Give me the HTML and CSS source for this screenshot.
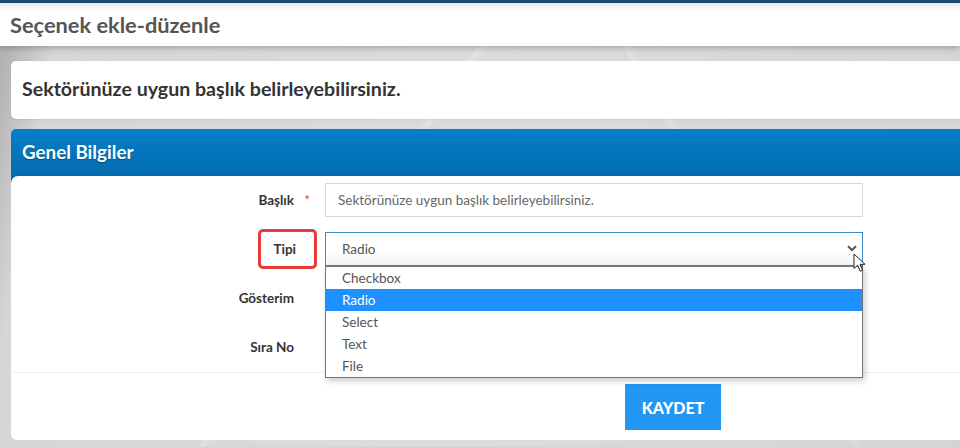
FILE: index.html
```html
<!DOCTYPE html>
<html lang="tr">
<head>
<meta charset="utf-8">
<title>Seçenek ekle-düzenle</title>
<link rel="stylesheet" href="styles.css">
</head>
<body>
<div class="topline"></div>
<header class="pagehead"><h1>Seçenek ekle-düzenle</h1></header>
<main class="content">
  <section class="note"><p>Sektörünüze uygun başlık belirleyebilirsiniz.</p></section>
  <section class="panel">
    <div class="panel-head"><h2>Genel Bilgiler</h2></div>
    <div class="panel-body">
      <form class="form">
        <div class="row">
          <label class="lbl"><span class="lbl-text">Başlık<span class="req">*</span></span></label>
          <div class="field"><div class="input">Sektörünüze uygun başlık belirleyebilirsiniz.</div></div>
        </div>
        <div class="row">
          <label class="lbl"><span class="lbl-text mark">Tipi</span></label>
          <div class="field">
            <div class="select">Radio
              <svg class="chev" width="10" height="7" viewBox="0 0 10 7"><path d="M1 1.2 L5 5 L9 1.2" fill="none" stroke="#555" stroke-width="2"/></svg>
            </div>
            <ul class="options">
              <li>Checkbox</li>
              <li class="sel">Radio</li>
              <li>Select</li>
              <li>Text</li>
              <li>File</li>
            </ul>
            <svg class="cursor" width="14" height="20" viewBox="0 0 14 20"><path d="M1 1 L1 15.5 L4.6 12.2 L7.2 18.2 L9.6 17.2 L7 11.3 L12 11.3 Z" fill="#fff" stroke="#222" stroke-width="1" stroke-linejoin="round"/></svg>
          </div>
        </div>
        <div class="row">
          <label class="lbl"><span class="lbl-text">Gösterim</span></label>
          <div class="field"><div class="input"></div></div>
        </div>
        <div class="row">
          <label class="lbl"><span class="lbl-text">Sıra No</span></label>
          <div class="field"><div class="input"></div></div>
        </div>
      </form>
      <div class="actions"><button type="button" class="btn">KAYDET</button></div>
    </div>
  </section>
</main>
</body>
</html>
```

FILE: styles.css
```css
* { box-sizing: border-box; }
html, body { margin: 0; padding: 0; }
body {
  width: 960px;
  height: 447px;
  overflow: hidden;
  font-family: Lato, "Noto Sans", sans-serif;
  background:
    linear-gradient(125deg, transparent 0 40%, rgba(255,255,255,0.25) 40.3%, transparent 41%),
    linear-gradient(60deg, transparent 0 70%, rgba(255,255,255,0.2) 70.3%, transparent 71%),
    linear-gradient(100deg, #a9a9a9 0%, #d6d6d6 6%, #dcdcdc 50%, #d4d4d4 100%);
}
.topline { height: 3px; background: #1d4b78; }
.pagehead {
  height: 43px;
  background: linear-gradient(#e6e6e6, #fff 8px, #fff);
  box-shadow: 0 2px 6px rgba(0,0,0,0.25);
  display: flex;
  align-items: center;
  padding-left: 10px;
  position: relative;
}
.pagehead h1 {
  margin: 0;
  font-size: 21.8px;
  font-weight: 700;
  color: #555;
}
.content {
  padding: 15px 0 0 11px;
  margin-right: -10px;
  display: flex;
  flex-direction: column;
  gap: 10px;
}
.note {
  height: 58px;
  background: #fff;
  border-radius: 5px;
  display: flex;
  align-items: center;
  padding: 0 11px 4px;
  box-shadow: 0 1px 2px rgba(0,0,0,0.08);
}
.note p {
  margin: 0;
  font-size: 19.6px;
  font-weight: 700;
  color: #333;
}
.panel {
  border-radius: 5px;
  background: linear-gradient(#0380cc, #0467a6) top left / 100% 56px no-repeat;
}
.panel-head {
  height: 47px;
  display: flex;
  align-items: center;
  padding: 0 11px 2px;
}
.panel-head h2 {
  margin: 0;
  font-size: 18.8px;
  font-weight: 700;
  color: #fff;
  text-shadow: 0 1px 1px rgba(0,0,0,0.25);
}
.panel-body {
  background: #fff;
  border-radius: 7px 0 0 6px;
}
.form {
  padding: 7px 0 8px;
  display: flex;
  flex-direction: column;
  gap: 15px;
  border-bottom: 1px solid #eeeeee;
}
.row {
  display: grid;
  grid-template-columns: 314px 538px;
  align-items: center;
  height: 34px;
}
.lbl {
  text-align: right;
  padding-right: 31px;
  font-size: 13.5px;
  font-weight: 700;
  color: #333;
}
.lbl-text { position: relative; display: inline-block; line-height: 18px; }
.req {
  position: absolute;
  right: -16px;
  top: 0;
  color: #e53935;
  font-weight: 400;
}
.mark { margin-right: -2px; }
.mark::before {
  content: "";
  position: absolute;
  left: -15px;
  right: -21px;
  top: -11px;
  bottom: -11px;
  border: 3px solid #e83a3a;
  border-radius: 5px;
}
.field { position: relative; height: 34px; }
.input {
  height: 34px;
  border: 1px solid #d4d8e0;
  background: #fff;
  padding: 0 12px;
  display: flex;
  align-items: center;
  font-size: 13.5px;
  color: #666;
}
.select {
  height: 34px;
  border: 1px solid #3a8dc5;
  background: linear-gradient(#fff 60%, #f3f3f3);
  padding: 0 16px;
  display: flex;
  align-items: center;
  font-size: 13.5px;
  color: #555;
  position: relative;
}
.chev { position: absolute; right: 5px; top: 12px; }
.options {
  position: absolute;
  left: 0;
  top: 34px;
  width: 538px;
  margin: 0;
  padding: 0;
  list-style: none;
  background: #fff;
  border: 1px solid #767676;
  box-shadow: 2px 3px 6px rgba(0,0,0,0.2);
  z-index: 2;
}
.options li {
  height: 22px;
  line-height: 22px;
  padding-left: 16px;
  font-size: 13.5px;
  color: #555;
}
.options li.sel { background: #1e90ff; color: #fff; }
.cursor { position: absolute; left: 528px; top: 21px; z-index: 3; }
.actions {
  padding: 11px 0 10px 614px;
}
.btn {
  width: 96px;
  height: 46px;
  border: 0;
  background: #2196f3;
  color: #fff;
  font-family: inherit;
  font-size: 16px;
  font-weight: 900;
  padding: 0;
}
```
